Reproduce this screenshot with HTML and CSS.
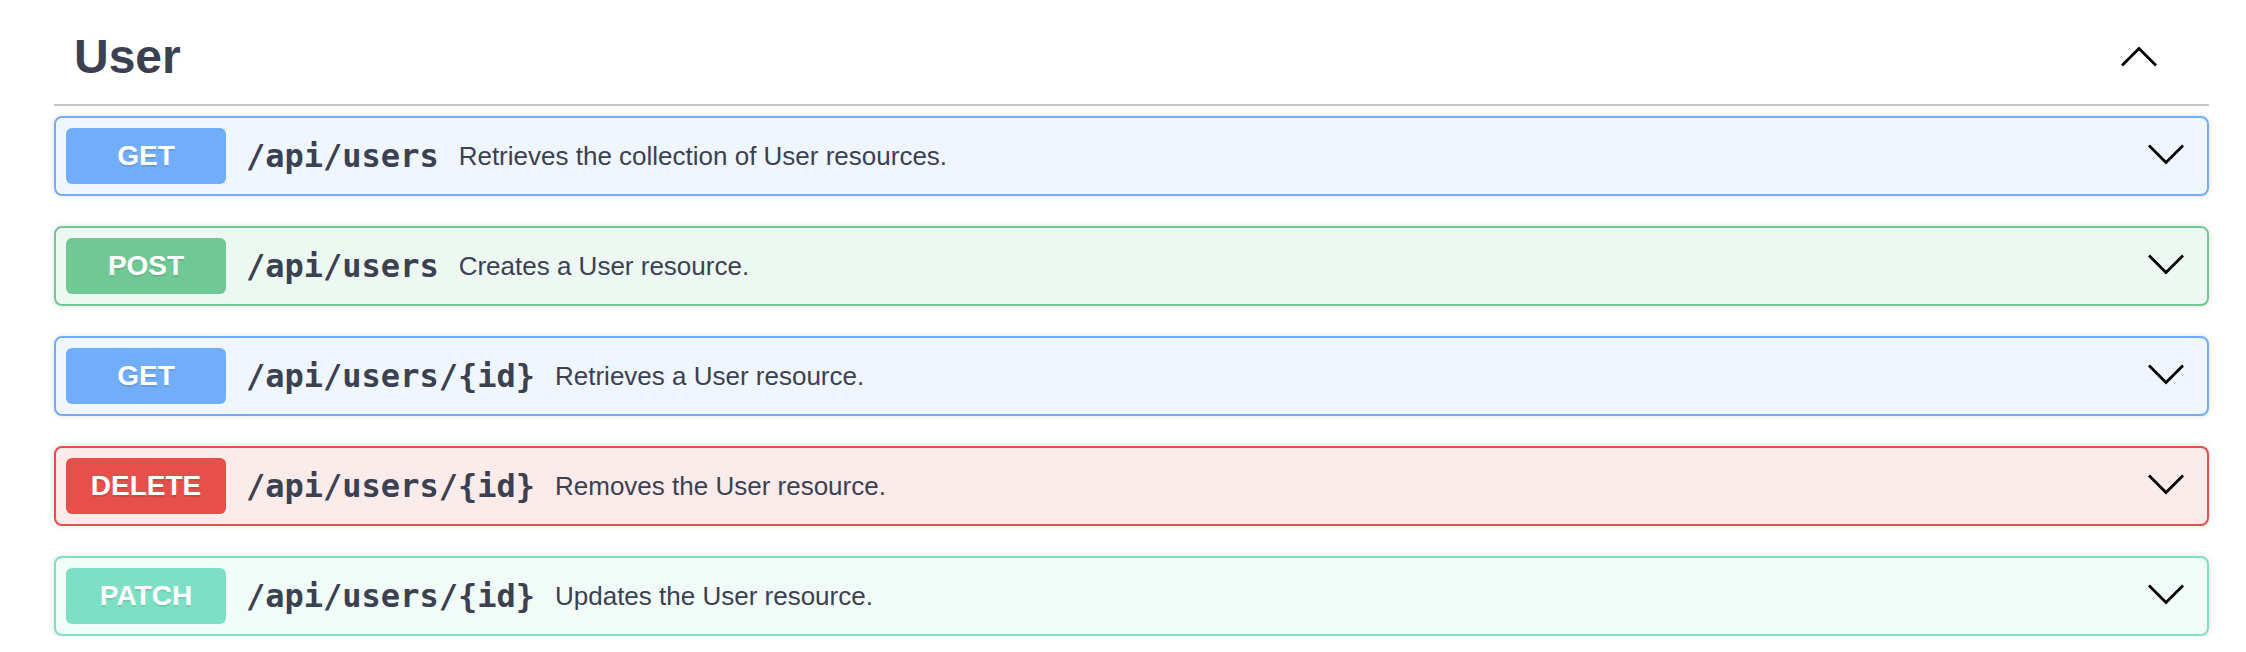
FILE: index.html
```html
<!DOCTYPE html>
<html lang="en">
<head>
<meta charset="utf-8">
<title>User</title>
<link rel="stylesheet" href="styles.css">
</head>
<body>
<div class="section">
  <div class="tag">
    <h3 class="tag-title">User</h3>
    <svg class="tag-arrow" width="38" height="22" viewBox="0 0 38 22"><polyline points="2,19.5 19,2.5 36,19.5" fill="none" stroke="#000" stroke-width="2.8"/></svg>
  </div>
  <div class="ops">
    <div class="op op-get">
      <span class="method">GET</span>
      <span class="path">/api/users</span>
      <span class="desc">Retrieves the collection of User resources.</span>
      <svg class="op-arrow" width="38" height="22" viewBox="0 0 38 22"><polyline points="2,2.5 19,19.5 36,2.5" fill="none" stroke="#000" stroke-width="2.8"/></svg>
    </div>
    <div class="op op-post">
      <span class="method">POST</span>
      <span class="path">/api/users</span>
      <span class="desc">Creates a User resource.</span>
      <svg class="op-arrow" width="38" height="22" viewBox="0 0 38 22"><polyline points="2,2.5 19,19.5 36,2.5" fill="none" stroke="#000" stroke-width="2.8"/></svg>
    </div>
    <div class="op op-get">
      <span class="method">GET</span>
      <span class="path">/api/users/{id}</span>
      <span class="desc">Retrieves a User resource.</span>
      <svg class="op-arrow" width="38" height="22" viewBox="0 0 38 22"><polyline points="2,2.5 19,19.5 36,2.5" fill="none" stroke="#000" stroke-width="2.8"/></svg>
    </div>
    <div class="op op-delete">
      <span class="method">DELETE</span>
      <span class="path">/api/users/{id}</span>
      <span class="desc">Removes the User resource.</span>
      <svg class="op-arrow" width="38" height="22" viewBox="0 0 38 22"><polyline points="2,2.5 19,19.5 36,2.5" fill="none" stroke="#000" stroke-width="2.8"/></svg>
    </div>
    <div class="op op-patch">
      <span class="method">PATCH</span>
      <span class="path">/api/users/{id}</span>
      <span class="desc">Updates the User resource.</span>
      <svg class="op-arrow" width="38" height="22" viewBox="0 0 38 22"><polyline points="2,2.5 19,19.5 36,2.5" fill="none" stroke="#000" stroke-width="2.8"/></svg>
    </div>
  </div>
</div>
</body>
</html>
```

FILE: styles.css
```css
html, body {
  margin: 0;
  padding: 0;
  background: #fff;
}
body {
  font-family: "Liberation Sans", Arial, sans-serif;
  color: #3b4151;
}
.section {
  margin: 0 37px 0 54px;
  padding-top: 9px;
}
.tag {
  display: flex;
  align-items: center;
  padding: 20px 51px 20px 20px;
  border-bottom: 2px solid #c5c6ca;
  margin-bottom: 10px;
}
.tag-title {
  flex: 1;
  margin: 0;
  font-size: 48px;
  line-height: 55px;
  font-weight: 700;
  color: #3b4151;
}
.tag-arrow {
  display: block;
}
.ops {
  display: flex;
  flex-direction: column;
  gap: 30px;
}
.op {
  display: flex;
  align-items: center;
  padding: 10px;
  border: 2px solid;
  border-radius: 8px;
  box-shadow: 0 0 6px rgba(0, 0, 0, 0.12);
}
.method {
  min-width: 160px;
  padding: 12px 0;
  line-height: 32px;
  font-size: 28px;
  font-weight: 700;
  text-align: center;
  color: #fff;
  border-radius: 6px;
  text-shadow: 0 2px 0 rgba(0, 0, 0, 0.1);
}
.path {
  padding: 0 20px;
  font-family: "DejaVu Sans Mono", "Liberation Mono", monospace;
  font-weight: 700;
  font-size: 32px;
  color: #3b4151;
}
.desc {
  flex: 1;
  font-size: 26px;
  color: #3b4151;
}
.op-arrow {
  display: block;
  margin-right: 12px;
  margin-top: -4px;
}
.op-get { border-color: #72adf9; background: #eff6fe; }
.op-get .method { background: #72adf9; }
.op-post { border-color: #70c994; background: #eef8f2; }
.op-post .method { background: #70c994; }
.op-delete { border-color: #e74f4a; background: #fcebeb; }
.op-delete .method { background: #e74f4a; }
.op-patch { border-color: #7de0c4; background: #f1fbf8; }
.op-patch .method { background: #7de0c4; }
```
